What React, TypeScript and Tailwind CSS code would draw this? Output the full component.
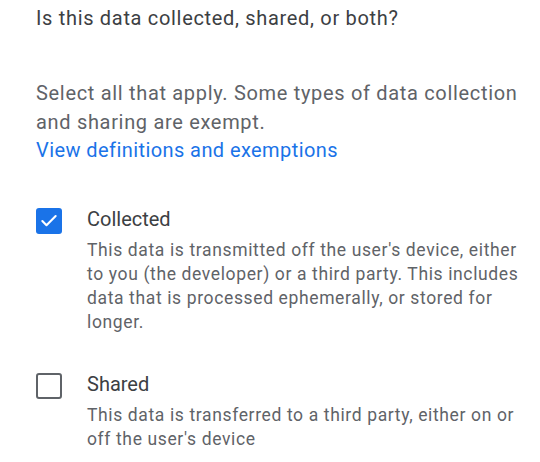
import { Check } from "lucide-react";

type Option = {
  label: string;
  description: string;
  checked: boolean;
};

const OPTIONS: Option[] = [
  {
    label: "Collected",
    description:
      "This data is transmitted off the user's device, either to you (the developer) or a third party. This includes data that is processed ephemerally, or stored for longer.",
    checked: true,
  },
  {
    label: "Shared",
    description:
      "This data is transferred to a third party, either on or off the user's device",
    checked: false,
  },
];

function Checkbox({ checked }: { checked: boolean }) {
  if (checked) {
    return (
      <div className="mt-[3px] flex h-[26px] w-[26px] shrink-0 items-center justify-center rounded-[3px] bg-[#1a73e8]">
        <Check className="h-[20px] w-[20px] text-white" strokeWidth={2.5} />
      </div>
    );
  }
  return (
    <div className="mt-[3px] h-[26px] w-[26px] shrink-0 rounded-[3px] border-[2.5px] border-[#5f6368] bg-white" />
  );
}

export default function App() {
  return (
    <div className="min-h-[462px] w-[540px] bg-white pl-[36px] pr-[18px] pt-[4px] font-['Roboto',sans-serif]">
      <h1 className="text-[20px] leading-[28px] tracking-[0.68px] text-[#3c4043]">
        Is this data collected, shared, or both?
      </h1>

      <p className="mt-[47px] text-[20px] leading-[28.5px] tracking-[0.68px] text-[#5f6368]">
        Select all that apply. Some types of data collection and sharing are
        exempt.
      </p>
      <a className="block text-[20px] leading-[29px] tracking-[0.42px] text-[#1a73e8]">
        View definitions and exemptions
      </a>

      <div className="mt-[40px] flex flex-col gap-[36px]">
        {OPTIONS.map((o) => (
          <div key={o.label} className="flex gap-[25px]">
            <Checkbox checked={o.checked} />
            <div>
              <div className="text-[20px] leading-[28px] text-[#3c4043]">
                {o.label}
              </div>
              <p className="mt-[5px] text-[17.5px] leading-[24px] tracking-[0.63px] text-[#5f6368]">
                {o.description}
              </p>
            </div>
          </div>
        ))}
      </div>
    </div>
  );
}
